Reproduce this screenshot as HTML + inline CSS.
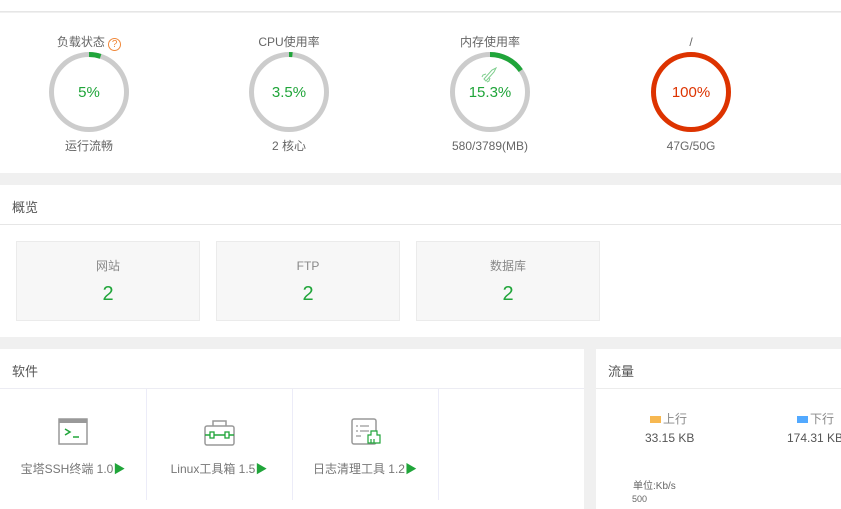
<!DOCTYPE html>
<html><head><meta charset="utf-8"><style>
*{margin:0;padding:0;box-sizing:border-box}
body{width:841px;height:500px;overflow:hidden;background:#f0f0f0;font-family:"Liberation Sans","Noto Sans CJK SC",sans-serif;color:#666;position:relative}
.abs{position:absolute}
.c{text-align:center}
.t{font-size:12px;color:#666;width:200px;line-height:16px}
.card{position:absolute;top:241px;width:184px;height:80px;background:#f7f7f7;border:1px solid #ebebeb;text-align:center}
.card .l{position:absolute;left:0;right:0;top:16px;line-height:16px;font-size:12px;color:#888}
.card .n{position:absolute;left:0;right:0;top:40px;line-height:24px;font-size:20px;color:#20a53a}
</style></head><body>
<div class="abs" style="left:0;top:0;width:841px;height:12px;background:#fff;border-bottom:1px solid #e6e6e6"></div>
<div class="abs" style="left:0;top:13px;width:841px;height:160px;background:#fff"></div>

<div class="abs c t" style="left:-11px;top:34px">负载状态 <span style="display:inline-block;width:13px;height:13px;border:1px solid #f0883a;border-radius:50%;color:#f0883a;font-size:10px;line-height:11px;vertical-align:-1px">?</span></div>
<div class="abs c t" style="left:189px;top:34px">CPU使用率</div>
<div class="abs c t" style="left:390px;top:34px">内存使用率</div>
<div class="abs c t" style="left:591px;top:34px">/</div>

<svg class="abs" style="left:0;top:0" width="841" height="173">
<g fill="none" stroke-width="5">
<circle cx="89" cy="92" r="37.5" stroke="#cccccc"/>
<circle cx="89" cy="92" r="37.5" stroke="#20a53a" stroke-dasharray="11.8 300" transform="rotate(-90 89 92)"/>
<circle cx="289" cy="92" r="37.5" stroke="#cccccc"/>
<circle cx="289" cy="92" r="37.5" stroke="#20a53a" stroke-dasharray="3.5 300" transform="rotate(-90 289 92)"/>
<circle cx="490" cy="92" r="37.5" stroke="#cccccc"/>
<circle cx="490" cy="92" r="37.5" stroke="#20a53a" stroke-dasharray="36 300" transform="rotate(-90 490 92)"/>
<circle cx="691" cy="92" r="37.5" stroke="#dd3300"/>
</g>
<g stroke="#7fce8e" fill="none" stroke-width="1"><path d="M484 79 L492 70 L496 68 L494 72 L486 81 Z M486 74 L483 75 L482 77 M490 78 L489 81 L487 82"/></g>
<g font-family="Liberation Sans" font-size="15" text-anchor="middle">
<text x="89" y="97" fill="#20a53a">5%</text>
<text x="289" y="97" fill="#20a53a">3.5%</text>
<text x="490" y="97" fill="#20a53a">15.3%</text>
<text x="691" y="97" fill="#dd3300">100%</text>
</g>
</svg>

<div class="abs c t" style="left:-11px;top:138px">运行流畅</div>
<div class="abs c t" style="left:189px;top:138px">2 核心</div>
<div class="abs c t" style="left:390px;top:138px">580/3789(MB)</div>
<div class="abs c t" style="left:591px;top:138px">47G/50G</div>

<div class="abs" style="left:0;top:185px;width:841px;height:152px;background:#fff"></div>
<div class="abs" style="left:12px;top:197px;font-size:13px;color:#555">概览</div>
<div class="abs" style="left:0;top:224px;width:841px;height:1px;background:#e6e6e6"></div>
<div class="card" style="left:16px"><div class="l">网站</div><div class="n">2</div></div>
<div class="card" style="left:216px"><div class="l">FTP</div><div class="n">2</div></div>
<div class="card" style="left:416px"><div class="l">数据库</div><div class="n">2</div></div>

<div class="abs" style="left:0;top:349px;width:584px;height:160px;background:#fff"></div>
<div class="abs" style="left:12px;top:361px;font-size:13px;color:#555">软件</div>
<div class="abs" style="left:0;top:388px;width:584px;height:1px;background:#ececf3"></div>
<div class="abs" style="left:146px;top:389px;width:1px;height:111px;background:#ececf8"></div>
<div class="abs" style="left:292px;top:389px;width:1px;height:111px;background:#ececf8"></div>
<div class="abs" style="left:438px;top:389px;width:1px;height:111px;background:#ececf8"></div>

<svg class="abs" style="left:0;top:389px" width="584" height="111">
<rect x="59" y="30" width="28" height="25" fill="none" stroke="#999" stroke-width="1.5"/>
<rect x="59" y="30" width="28" height="4" fill="#999"/>
<path d="M65 40 L70 43 L65 46 M73 48 L79 48" stroke="#20a53a" stroke-width="1.5" fill="none"/>
<rect x="205" y="37" width="29" height="19" rx="2" fill="none" stroke="#999" stroke-width="1.5"/>
<path d="M213 37 V32 H226 V37" fill="none" stroke="#999" stroke-width="1.5"/>
<path d="M205 46 H234" stroke="#20a53a" stroke-width="1.5"/>
<rect x="210" y="43" width="4" height="6" fill="#fff" stroke="#20a53a" stroke-width="1.3"/>
<rect x="225" y="43" width="4" height="6" fill="#fff" stroke="#20a53a" stroke-width="1.3"/>
<rect x="352" y="30" width="24" height="25" rx="2" fill="none" stroke="#999" stroke-width="1.5"/>
<path d="M356 37h2M360 37h9M356 42h2M360 42h9M356 47h5" stroke="#999" stroke-width="1.3"/>
<path d="M371 42v4h-3v8h12v-8h-3v-4z M371 50v4 M374 50v4" fill="#fff" stroke="#20a53a" stroke-width="1.2"/>
</svg>
<div class="abs c" style="left:0;top:460px;width:146px;font-size:12px;color:#777">宝塔SSH终端 1.0<span style="color:#20a53a">▶</span></div>
<div class="abs c" style="left:146px;top:460px;width:146px;font-size:12px;color:#777">Linux工具箱 1.5<span style="color:#20a53a">▶</span></div>
<div class="abs c" style="left:292px;top:460px;width:146px;font-size:12px;color:#777">日志清理工具 1.2<span style="color:#20a53a">▶</span></div>

<div class="abs" style="left:596px;top:349px;width:245px;height:160px;background:#fff"></div>
<div class="abs" style="left:608px;top:361px;font-size:13px;color:#555">流量</div>
<div class="abs" style="left:596px;top:388px;width:245px;height:1px;background:#ececec"></div>
<div class="abs" style="left:650px;top:410px;font-size:12px;color:#888"><span style="display:inline-block;width:11px;height:7px;background:#f7b851;margin-right:2px"></span>上行</div>
<div class="abs" style="left:645px;top:431px;font-size:12px;color:#555">33.15 KB</div>
<div class="abs" style="left:797px;top:410px;font-size:12px;color:#888;white-space:nowrap"><span style="display:inline-block;width:11px;height:7px;background:#52a9ff;margin-right:2px"></span>下行</div>
<div class="abs" style="left:787px;top:431px;font-size:12px;color:#555;white-space:nowrap">174.31 KB</div>
<div class="abs" style="left:633px;top:477px;font-size:10px;color:#666">单位:Kb/s</div>
<div class="abs" style="left:632px;top:494px;font-size:9px;color:#666">500</div>
</body></html>
